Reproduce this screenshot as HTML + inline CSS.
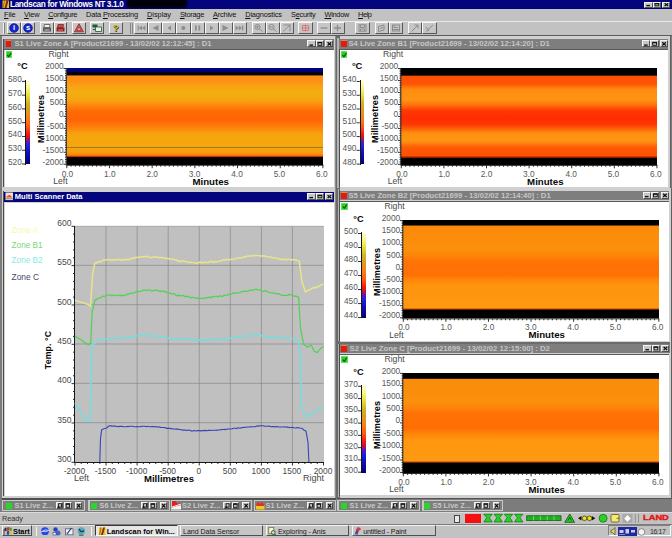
<!DOCTYPE html><html><head><meta charset="utf-8"><title>Landscan for Windows NT 3.1.0</title><style>
*{box-sizing:border-box;margin:0;padding:0}
html,body{width:672px;height:538px;overflow:hidden;background:#7c7c7c}
body{position:relative;font-family:"Liberation Sans",sans-serif;font-size:9px;color:#000}
.a{position:absolute}
.t{position:absolute;white-space:nowrap;line-height:1}
.b{position:absolute;background:#c6c6c6;border:1px solid;border-color:#f4f4f4 #505050 #505050 #f4f4f4}
svg{position:absolute;left:0;top:0;overflow:visible}
</style></head><body><div class="a" style="left:0px;top:0px;width:672px;height:8.8px;background:#04047c;"></div>
<div class="a" style="left:127.5px;top:0px;width:58px;height:6.6px;background:#00000c;border-radius:0 0 3px 3px;box-shadow:0 0 2px 1px #00000c"></div>
<div class="t" style="left:10px;top:0.5px;font-size:8.2px;color:#ffffff;letter-spacing:-0.34px;font-weight:bold;">Landscan for Windows NT 3.1.0</div>
<div class="b" style="left:644.4px;top:1.5px;width:8.3px;height:6.3px"></div>
<div class="b" style="left:652.7px;top:1.5px;width:8.3px;height:6.3px"></div>
<div class="b" style="left:662.2px;top:1.5px;width:8.3px;height:6.3px"></div>
<div class="a" style="left:0px;top:8.8px;width:672px;height:12.2px;background:#c2c2c2;"></div>
<div class="t" style="left:4px;top:10.5px;font-size:7.4px;color:#101010;letter-spacing:-0.11px;"><u>F</u>ile</div>
<div class="t" style="left:24.1px;top:10.5px;font-size:7.4px;color:#101010;letter-spacing:-0.17px;"><u>V</u>iew</div>
<div class="t" style="left:48.2px;top:10.5px;font-size:7.4px;color:#101010;letter-spacing:-0.36px;"><u>C</u>onfigure</div>
<div class="t" style="left:86px;top:10.5px;font-size:7.4px;color:#101010;letter-spacing:-0.15px;">Data <u>P</u>rocessing</div>
<div class="t" style="left:147px;top:10.5px;font-size:7.4px;color:#101010;letter-spacing:-0.04px;"><u>D</u>isplay</div>
<div class="t" style="left:179.9px;top:10.5px;font-size:7.4px;color:#101010;letter-spacing:-0.25px;"><u>S</u>torage</div>
<div class="t" style="left:213px;top:10.5px;font-size:7.4px;color:#101010;letter-spacing:-0.2px;"><u>A</u>rchive</div>
<div class="t" style="left:245.2px;top:10.5px;font-size:7.4px;color:#101010;letter-spacing:-0.15px;"><u>D</u>iagnostics</div>
<div class="t" style="left:291px;top:10.5px;font-size:7.4px;color:#101010;letter-spacing:-0.28px;">S<u>e</u>curity</div>
<div class="t" style="left:324.5px;top:10.5px;font-size:7.4px;color:#101010;letter-spacing:-0.3px;"><u>W</u>indow</div>
<div class="t" style="left:358px;top:10.5px;font-size:7.4px;color:#101010;letter-spacing:-0.41px;"><u>H</u>elp</div>
<div class="a" style="left:0px;top:20.5px;width:672px;height:14.3px;background:#c2c2c2;border-top:1px solid #e8e8e8"></div>
<div class="a" style="left:0px;top:34.8px;width:672px;height:1.6px;background:#5c5c5c;"></div>
<div class="a" style="left:3px;top:22.5px;width:1px;height:11.5px;background:#f0f0f0;"></div>
<div class="a" style="left:4px;top:22.5px;width:1px;height:11.5px;background:#808080;"></div>
<div class="b" style="left:7px;top:21.8px;width:14px;height:11.8px;border-color:#f8f8f8 #585858 #585858 #f8f8f8"></div>
<div class="b" style="left:21px;top:21.8px;width:14px;height:11.8px;border-color:#f8f8f8 #585858 #585858 #f8f8f8"></div>
<div class="b" style="left:40px;top:21.8px;width:13.7px;height:11.8px;border-color:#f8f8f8 #585858 #585858 #f8f8f8"></div>
<div class="b" style="left:53.7px;top:21.8px;width:13.8px;height:11.8px;border-color:#f8f8f8 #585858 #585858 #f8f8f8"></div>
<div class="b" style="left:72px;top:21.8px;width:14px;height:11.8px;border-color:#f8f8f8 #585858 #585858 #f8f8f8"></div>
<div class="b" style="left:90px;top:21.8px;width:14px;height:11.8px;border-color:#f8f8f8 #585858 #585858 #f8f8f8"></div>
<div class="b" style="left:109px;top:21.8px;width:14px;height:11.8px;border-color:#f8f8f8 #585858 #585858 #f8f8f8"></div>
<div class="b" style="left:134px;top:21.8px;width:14px;height:11.8px;border-color:#f8f8f8 #585858 #585858 #f8f8f8"></div>
<div class="b" style="left:148px;top:21.8px;width:14px;height:11.8px;border-color:#f8f8f8 #585858 #585858 #f8f8f8"></div>
<div class="b" style="left:162px;top:21.8px;width:14px;height:11.8px;border-color:#f8f8f8 #585858 #585858 #f8f8f8"></div>
<div class="b" style="left:176px;top:21.8px;width:14.5px;height:11.8px;border-color:#f8f8f8 #585858 #585858 #f8f8f8"></div>
<div class="b" style="left:190.5px;top:21.8px;width:14px;height:11.8px;border-color:#f8f8f8 #585858 #585858 #f8f8f8"></div>
<div class="b" style="left:204.5px;top:21.8px;width:14px;height:11.8px;border-color:#f8f8f8 #585858 #585858 #f8f8f8"></div>
<div class="b" style="left:218.5px;top:21.8px;width:14px;height:11.8px;border-color:#f8f8f8 #585858 #585858 #f8f8f8"></div>
<div class="b" style="left:232.5px;top:21.8px;width:14.5px;height:11.8px;border-color:#f8f8f8 #585858 #585858 #f8f8f8"></div>
<div class="b" style="left:252px;top:21.8px;width:13.5px;height:11.8px;border-color:#f8f8f8 #585858 #585858 #f8f8f8"></div>
<div class="b" style="left:265.5px;top:21.8px;width:14px;height:11.8px;border-color:#f8f8f8 #585858 #585858 #f8f8f8"></div>
<div class="b" style="left:279.5px;top:21.8px;width:14.5px;height:11.8px;border-color:#f8f8f8 #585858 #585858 #f8f8f8"></div>
<div class="b" style="left:298px;top:21.8px;width:15px;height:11.8px;border-color:#f8f8f8 #585858 #585858 #f8f8f8"></div>
<div class="b" style="left:317px;top:21.8px;width:13.5px;height:11.8px;border-color:#f8f8f8 #585858 #585858 #f8f8f8"></div>
<div class="b" style="left:330.5px;top:21.8px;width:14px;height:11.8px;border-color:#f8f8f8 #585858 #585858 #f8f8f8"></div>
<div class="b" style="left:355px;top:21.8px;width:15px;height:11.8px;border-color:#f8f8f8 #585858 #585858 #f8f8f8"></div>
<div class="b" style="left:375px;top:21.8px;width:14px;height:11.8px;border-color:#f8f8f8 #585858 #585858 #f8f8f8"></div>
<div class="b" style="left:389px;top:21.8px;width:14px;height:11.8px;border-color:#f8f8f8 #585858 #585858 #f8f8f8"></div>
<div class="b" style="left:408px;top:21.8px;width:14px;height:11.8px;border-color:#f8f8f8 #585858 #585858 #f8f8f8"></div>
<div class="b" style="left:422px;top:21.8px;width:15px;height:11.8px;border-color:#f8f8f8 #585858 #585858 #f8f8f8"></div>
<div class="a" style="left:129.5px;top:22.5px;width:0.8px;height:11.5px;background:#f0f0f0;"></div>
<div class="a" style="left:130.3px;top:22.5px;width:0.8px;height:11.5px;background:#888;"></div>
<div class="a" style="left:131.5px;top:22.5px;width:0.8px;height:11.5px;background:#f0f0f0;"></div>
<div class="a" style="left:132.3px;top:22.5px;width:0.8px;height:11.5px;background:#888;"></div>
<div class="t" style="left:12.96px;top:24.25px;font-size:7.5px;color:#fff;font-weight:bold;z-index:3;">i</div>
<div class="t" style="left:25.91px;top:24.05px;font-size:7.5px;color:#fff;font-weight:bold;z-index:3;">s</div>
<div class="t" style="left:113.1px;top:23.25px;font-size:9.5px;color:#c8b000;font-weight:bold;text-shadow:0.500px 0.500px 0 #403000;">?</div>
<div class="a" style="left:1.5px;top:36.3px;width:334.5px;height:154px;background:#d0d0d0;"></div>
<div class="a" style="left:2.9px;top:38.7px;width:1.6px;height:148.8px;background:#4c4c4c;"></div>
<div class="a" style="left:335.3px;top:36.3px;width:0.7px;height:154px;background:#8c8c8c;"></div>
<div class="a" style="left:1.5px;top:189.6px;width:334.5px;height:0.7px;background:#606060;"></div>
<div class="a" style="left:4px;top:39px;width:329.7px;height:9.7px;background:#7e7e7e;"></div>
<div class="a" style="left:5.7px;top:40.3px;width:5.7px;height:6.8px;background:#e01c10;border-top:1.300px solid #f08040"></div>
<div class="t" style="left:14.5px;top:40.22px;font-size:7.63px;color:#c6c6c6;letter-spacing:0px;font-weight:bold;">S1 Live Zone A [Product21699 - 13/02/02 12:12:45] : D1</div>
<div class="b" style="left:307.4px;top:40.4px;width:8.3px;height:6.9px"></div>
<div class="b" style="left:315.7px;top:40.4px;width:8.3px;height:6.9px"></div>
<div class="b" style="left:325.2px;top:40.4px;width:8.3px;height:6.9px"></div>
<div class="a" style="left:4.5px;top:50px;width:329px;height:136.7px;background:#ffffff;"></div>
<div class="a" style="left:4px;top:49.3px;width:329.5px;height:0.9px;background:#585858;"></div>
<div class="a" style="left:5.5px;top:51.3px;width:6.6px;height:6.9px;background:#28d028;border:0.600px solid #60e060"></div>
<div class="t" style="left:48.5px;top:49.9px;font-size:8.6px;color:#484848;">Right</div>
<div class="t" style="left:17.3px;top:62.25px;font-size:9.3px;color:#080808;font-weight:bold;">°C</div>
<div class="a" style="left:26.2px;top:80.6px;width:3.6px;height:83.7px;background:linear-gradient(to bottom,#ffffc8 0%,#f8f888 8%,#e8e038 17%,#d0b028 27%,#e09820 36%,#f88018 45%,#ff5810 55%,#f01810 64%,#c01040 69.5%,#6018b0 73%,#2020e0 78%,#1010c0 86%,#000078 100%);"></div>
<div class="a" style="left:25.1px;top:80.3px;width:1.3px;height:84.5px;background:#181818;"></div>
<div class="t" style="left:7.95px;top:75.25px;font-size:8.3px;color:#585858;">580</div>
<div class="t" style="left:7.95px;top:89.02px;font-size:8.3px;color:#585858;">570</div>
<div class="t" style="left:7.95px;top:102.78px;font-size:8.3px;color:#585858;">560</div>
<div class="t" style="left:7.95px;top:116.55px;font-size:8.3px;color:#585858;">550</div>
<div class="t" style="left:7.95px;top:130.32px;font-size:8.3px;color:#585858;">540</div>
<div class="t" style="left:7.95px;top:144.08px;font-size:8.3px;color:#585858;">530</div>
<div class="t" style="left:7.95px;top:157.85px;font-size:8.3px;color:#585858;">520</div>
<div class="a" style="left:66.8px;top:68px;width:256.1px;height:96.7px;background:linear-gradient(to bottom,#000080 0%,#00007c 3.72%,#000000 4.76%,#000000 7.14%,#ff8c14 8.17%,#ff9014 13.44%,#f8a412 19.65%,#f2ae10 25.85%,#f6a410 33.09%,#fe840c 39.3%,#ff6806 45.5%,#ff6404 53.77%,#fe840c 62.05%,#f6a40e 68.25%,#f4a80c 81.7%,#f69c0c 86.87%,#ff7c0c 89.97%,#c03000 91.31%,#000000 92.24%,#000000 100%);"></div>
<div class="a" style="left:66.8px;top:147px;width:256.1px;height:0.9px;background:rgba(140,100,50,0.750);"></div>
<div class="t" style="left:45.24px;top:62.05px;font-size:8.3px;color:#585858;">2000</div>
<div class="t" style="left:45.24px;top:74.01px;font-size:8.3px;color:#585858;">1500</div>
<div class="t" style="left:45.24px;top:85.97px;font-size:8.3px;color:#585858;">1000</div>
<div class="t" style="left:49.85px;top:97.94px;font-size:8.3px;color:#585858;">500</div>
<div class="t" style="left:59.08px;top:109.9px;font-size:8.3px;color:#585858;">0</div>
<div class="t" style="left:47.09px;top:121.86px;font-size:8.3px;color:#585858;">-500</div>
<div class="t" style="left:42.47px;top:133.82px;font-size:8.3px;color:#585858;">-1000</div>
<div class="t" style="left:42.47px;top:145.79px;font-size:8.3px;color:#585858;">-1500</div>
<div class="t" style="left:42.47px;top:157.75px;font-size:8.3px;color:#585858;">-2000</div>
<div class="t" style="left:41.5px;top:118.85px;font-size:9.200px;font-weight:bold;color:#080808;transform:translate(-50%,-50%) rotate(-90deg)">Millimetres</div>
<div class="t" style="left:61.63px;top:169.55px;font-size:8.3px;color:#585858;">0.0</div>
<div class="t" style="left:104.03px;top:169.55px;font-size:8.3px;color:#585858;">1.0</div>
<div class="t" style="left:146.43px;top:169.55px;font-size:8.3px;color:#585858;">2.0</div>
<div class="t" style="left:188.83px;top:169.55px;font-size:8.3px;color:#585858;">3.0</div>
<div class="t" style="left:231.23px;top:169.55px;font-size:8.3px;color:#585858;">4.0</div>
<div class="t" style="left:273.63px;top:169.55px;font-size:8.3px;color:#585858;">5.0</div>
<div class="t" style="left:316.03px;top:169.55px;font-size:8.3px;color:#585858;">6.0</div>
<div class="t" style="left:53.2px;top:177.2px;font-size:8.6px;color:#484848;">Left</div>
<div class="t" style="left:192.5px;top:176.88px;font-size:9.66px;color:#080808;letter-spacing:0px;font-weight:bold;">Minutes</div>
<div class="a" style="left:336.8px;top:36.3px;width:333.9px;height:154px;background:#d0d0d0;"></div>
<div class="a" style="left:335.6px;top:36.3px;width:4.2px;height:154px;background:#6a6a6a;"></div>
<div class="a" style="left:337.4px;top:37.5px;width:1.3px;height:151.7px;background:#b4b4b4;"></div>
<div class="a" style="left:338.7px;top:38.7px;width:1.1px;height:148.8px;background:#4c4c4c;"></div>
<div class="a" style="left:670px;top:36.3px;width:0.7px;height:154px;background:#606060;"></div>
<div class="a" style="left:336.8px;top:189.6px;width:333.9px;height:0.7px;background:#606060;"></div>
<div class="a" style="left:339.3px;top:39px;width:329.1px;height:9.7px;background:#7e7e7e;"></div>
<div class="a" style="left:341px;top:40.3px;width:5.7px;height:6.8px;background:#e01c10;border-top:1.300px solid #f08040"></div>
<div class="t" style="left:348.5px;top:40.23px;font-size:7.62px;color:#c6c6c6;letter-spacing:0px;font-weight:bold;">S4 Live Zone B1 [Product21699 - 13/02/02 12:14:20] : D1</div>
<div class="b" style="left:642.1px;top:40.4px;width:8.3px;height:6.9px"></div>
<div class="b" style="left:650.4px;top:40.4px;width:8.3px;height:6.9px"></div>
<div class="b" style="left:659.9px;top:40.4px;width:8.3px;height:6.9px"></div>
<div class="a" style="left:339.8px;top:50px;width:328.4px;height:136.7px;background:#ffffff;"></div>
<div class="a" style="left:339.3px;top:49.3px;width:328.9px;height:0.9px;background:#585858;"></div>
<div class="a" style="left:340.8px;top:51.3px;width:6.6px;height:6.9px;background:#28d028;border:0.600px solid #60e060"></div>
<div class="t" style="left:383.1px;top:50px;font-size:8.6px;color:#484848;">Right</div>
<div class="t" style="left:351.9px;top:62.35px;font-size:9.3px;color:#080808;font-weight:bold;">°C</div>
<div class="a" style="left:360.8px;top:80.7px;width:3.6px;height:83.7px;background:linear-gradient(to bottom,#ffffc8 0%,#f8f888 8%,#e8e038 17%,#d0b028 27%,#e09820 36%,#f88018 45%,#ff5810 55%,#f01810 64%,#c01040 69.5%,#6018b0 73%,#2020e0 78%,#1010c0 86%,#000078 100%);"></div>
<div class="a" style="left:359.7px;top:80.4px;width:1.3px;height:84.5px;background:#181818;"></div>
<div class="t" style="left:342.55px;top:75.35px;font-size:8.3px;color:#585858;">540</div>
<div class="t" style="left:342.55px;top:89.12px;font-size:8.3px;color:#585858;">530</div>
<div class="t" style="left:342.55px;top:102.88px;font-size:8.3px;color:#585858;">520</div>
<div class="t" style="left:342.55px;top:116.65px;font-size:8.3px;color:#585858;">510</div>
<div class="t" style="left:342.55px;top:130.42px;font-size:8.3px;color:#585858;">500</div>
<div class="t" style="left:342.55px;top:144.18px;font-size:8.3px;color:#585858;">490</div>
<div class="t" style="left:342.55px;top:157.95px;font-size:8.3px;color:#585858;">480</div>
<div class="a" style="left:401.3px;top:68.1px;width:255.6px;height:96.7px;background:linear-gradient(to bottom,#000000 0%,#000000 7.14%,#ff5004 8.79%,#ff5406 16.44%,#ff8c10 22.13%,#ff9412 32.99%,#ff6c0a 38.68%,#ff3802 43.85%,#ff2c00 51.6%,#ff3602 57.81%,#ff6006 62.77%,#ff9010 67.11%,#ff9412 75.39%,#ff5c06 81.59%,#ff5004 90.38%,#a02000 92.14%,#000000 93.38%,#000000 100%);"></div>
<div class="t" style="left:379.74px;top:62.15px;font-size:8.3px;color:#585858;">2000</div>
<div class="t" style="left:379.74px;top:74.11px;font-size:8.3px;color:#585858;">1500</div>
<div class="t" style="left:379.74px;top:86.08px;font-size:8.3px;color:#585858;">1000</div>
<div class="t" style="left:384.35px;top:98.04px;font-size:8.3px;color:#585858;">500</div>
<div class="t" style="left:393.58px;top:110px;font-size:8.3px;color:#585858;">0</div>
<div class="t" style="left:381.59px;top:121.96px;font-size:8.3px;color:#585858;">-500</div>
<div class="t" style="left:376.97px;top:133.92px;font-size:8.3px;color:#585858;">-1000</div>
<div class="t" style="left:376.97px;top:145.89px;font-size:8.3px;color:#585858;">-1500</div>
<div class="t" style="left:376.97px;top:157.85px;font-size:8.3px;color:#585858;">-2000</div>
<div class="t" style="left:376.1px;top:118.95px;font-size:9.200px;font-weight:bold;color:#080808;transform:translate(-50%,-50%) rotate(-90deg)">Millimetres</div>
<div class="t" style="left:396.13px;top:169.65px;font-size:8.3px;color:#585858;">0.0</div>
<div class="t" style="left:438.45px;top:169.65px;font-size:8.3px;color:#585858;">1.0</div>
<div class="t" style="left:480.76px;top:169.65px;font-size:8.3px;color:#585858;">2.0</div>
<div class="t" style="left:523.08px;top:169.65px;font-size:8.3px;color:#585858;">3.0</div>
<div class="t" style="left:565.4px;top:169.65px;font-size:8.3px;color:#585858;">4.0</div>
<div class="t" style="left:607.71px;top:169.65px;font-size:8.3px;color:#585858;">5.0</div>
<div class="t" style="left:650.03px;top:169.65px;font-size:8.3px;color:#585858;">6.0</div>
<div class="t" style="left:387.8px;top:177.3px;font-size:8.6px;color:#484848;">Left</div>
<div class="t" style="left:527.1px;top:176.98px;font-size:9.66px;color:#080808;letter-spacing:0px;font-weight:bold;">Minutes</div>
<div class="a" style="left:337.2px;top:187.8px;width:334.3px;height:156.4px;background:#d0d0d0;"></div>
<div class="a" style="left:336px;top:187.8px;width:4.2px;height:156.4px;background:#6a6a6a;"></div>
<div class="a" style="left:337.8px;top:189px;width:1.3px;height:154.1px;background:#b4b4b4;"></div>
<div class="a" style="left:339.1px;top:190.2px;width:1.1px;height:151.2px;background:#4c4c4c;"></div>
<div class="a" style="left:670.8px;top:187.8px;width:0.7px;height:156.4px;background:#606060;"></div>
<div class="a" style="left:337.2px;top:343.5px;width:334.3px;height:0.7px;background:#606060;"></div>
<div class="a" style="left:339.7px;top:190.5px;width:329.5px;height:9.7px;background:#7e7e7e;"></div>
<div class="a" style="left:341.4px;top:191.8px;width:5.7px;height:6.8px;background:#e01c10;border-top:1.300px solid #f08040"></div>
<div class="t" style="left:348.5px;top:191.7px;font-size:7.65px;color:#c6c6c6;letter-spacing:0px;font-weight:bold;">S5 Live Zone B2 [Product21699 - 13/02/02 12:14:40] : D1</div>
<div class="b" style="left:642.9px;top:191.9px;width:8.3px;height:6.9px"></div>
<div class="b" style="left:651.2px;top:191.9px;width:8.3px;height:6.9px"></div>
<div class="b" style="left:660.7px;top:191.9px;width:8.3px;height:6.9px"></div>
<div class="a" style="left:340.2px;top:201.5px;width:328.8px;height:139.1px;background:#ffffff;"></div>
<div class="a" style="left:339.7px;top:200.8px;width:329.3px;height:0.9px;background:#585858;"></div>
<div class="a" style="left:341.2px;top:202.8px;width:6.6px;height:6.9px;background:#28d028;border:0.600px solid #60e060"></div>
<div class="t" style="left:384.5px;top:202px;font-size:8.6px;color:#484848;">Right</div>
<div class="t" style="left:353.3px;top:214.8px;font-size:9.3px;color:#080808;font-weight:bold;">°C</div>
<div class="a" style="left:362.2px;top:232.7px;width:3.6px;height:85.2px;background:linear-gradient(to bottom,#ffffc8 0%,#f8f888 8%,#e8e038 17%,#d0b028 27%,#e09820 36%,#f88018 45%,#ff5810 55%,#f01810 64%,#c01040 69.5%,#6018b0 73%,#2020e0 78%,#1010c0 86%,#000078 100%);"></div>
<div class="a" style="left:361.1px;top:232.4px;width:1.3px;height:86px;background:#181818;"></div>
<div class="t" style="left:343.95px;top:227.35px;font-size:8.3px;color:#585858;">500</div>
<div class="t" style="left:343.95px;top:241.37px;font-size:8.3px;color:#585858;">490</div>
<div class="t" style="left:343.95px;top:255.38px;font-size:8.3px;color:#585858;">480</div>
<div class="t" style="left:343.95px;top:269.4px;font-size:8.3px;color:#585858;">470</div>
<div class="t" style="left:343.95px;top:283.42px;font-size:8.3px;color:#585858;">460</div>
<div class="t" style="left:343.95px;top:297.43px;font-size:8.3px;color:#585858;">450</div>
<div class="t" style="left:343.95px;top:311.45px;font-size:8.3px;color:#585858;">440</div>
<div class="a" style="left:403.3px;top:220.1px;width:255.5px;height:98.2px;background:linear-gradient(to bottom,#000000 0%,#000000 5.09%,#fc8a0a 6.21%,#fc900c 30.45%,#fe840a 36.56%,#ff7406 41.65%,#ff7004 55.91%,#fe860a 61%,#ff940e 67.11%,#ff9810 89.71%,#c04000 90.94%,#000000 91.85%,#000000 100%);"></div>
<div class="t" style="left:381.74px;top:214.15px;font-size:8.3px;color:#585858;">2000</div>
<div class="t" style="left:381.74px;top:226.3px;font-size:8.3px;color:#585858;">1500</div>
<div class="t" style="left:381.74px;top:238.45px;font-size:8.3px;color:#585858;">1000</div>
<div class="t" style="left:386.35px;top:250.6px;font-size:8.3px;color:#585858;">500</div>
<div class="t" style="left:395.58px;top:262.75px;font-size:8.3px;color:#585858;">0</div>
<div class="t" style="left:383.59px;top:274.9px;font-size:8.3px;color:#585858;">-500</div>
<div class="t" style="left:378.97px;top:287.05px;font-size:8.3px;color:#585858;">-1000</div>
<div class="t" style="left:378.97px;top:299.2px;font-size:8.3px;color:#585858;">-1500</div>
<div class="t" style="left:378.97px;top:311.35px;font-size:8.3px;color:#585858;">-2000</div>
<div class="t" style="left:377.5px;top:271.7px;font-size:9.200px;font-weight:bold;color:#080808;transform:translate(-50%,-50%) rotate(-90deg)">Millimetres</div>
<div class="t" style="left:398.13px;top:323.15px;font-size:8.3px;color:#585858;">0.0</div>
<div class="t" style="left:440.43px;top:323.15px;font-size:8.3px;color:#585858;">1.0</div>
<div class="t" style="left:482.73px;top:323.15px;font-size:8.3px;color:#585858;">2.0</div>
<div class="t" style="left:525.03px;top:323.15px;font-size:8.3px;color:#585858;">3.0</div>
<div class="t" style="left:567.33px;top:323.15px;font-size:8.3px;color:#585858;">4.0</div>
<div class="t" style="left:609.63px;top:323.15px;font-size:8.3px;color:#585858;">5.0</div>
<div class="t" style="left:651.93px;top:323.15px;font-size:8.3px;color:#585858;">6.0</div>
<div class="t" style="left:389.2px;top:330.8px;font-size:8.6px;color:#484848;">Left</div>
<div class="t" style="left:528.5px;top:330.48px;font-size:9.66px;color:#080808;letter-spacing:0px;font-weight:bold;">Minutes</div>
<div class="a" style="left:337.2px;top:340.9px;width:334.8px;height:157.5px;background:#d0d0d0;"></div>
<div class="a" style="left:336px;top:340.9px;width:4.2px;height:157.5px;background:#6a6a6a;"></div>
<div class="a" style="left:337.8px;top:342.1px;width:1.3px;height:155.2px;background:#b4b4b4;"></div>
<div class="a" style="left:339.1px;top:343.3px;width:1.1px;height:152.3px;background:#4c4c4c;"></div>
<div class="a" style="left:671.3px;top:340.9px;width:0.7px;height:157.5px;background:#606060;"></div>
<div class="a" style="left:337.2px;top:497.6px;width:334.8px;height:1.7px;background:#545454;"></div>
<div class="a" style="left:337.2px;top:342.3px;width:333.3px;height:1.3px;background:#6c6c6c;"></div>
<div class="a" style="left:339.7px;top:343.6px;width:330px;height:9.7px;background:#7e7e7e;"></div>
<div class="a" style="left:341.4px;top:344.9px;width:5.7px;height:6.8px;background:#e01c10;border-top:1.300px solid #f08040"></div>
<div class="t" style="left:349.5px;top:344.72px;font-size:7.74px;color:#c6c6c6;letter-spacing:0px;font-weight:bold;">S2 Live Zone C [Product21699 - 13/02/02 12:15:00] : D2</div>
<div class="b" style="left:643.4px;top:345px;width:8.3px;height:6.9px"></div>
<div class="b" style="left:651.7px;top:345px;width:8.3px;height:6.9px"></div>
<div class="b" style="left:661.2px;top:345px;width:8.3px;height:6.9px"></div>
<div class="a" style="left:340.2px;top:354.6px;width:329.3px;height:140.2px;background:#ffffff;"></div>
<div class="a" style="left:339.7px;top:353.9px;width:329.8px;height:0.9px;background:#585858;"></div>
<div class="a" style="left:341.2px;top:355.9px;width:6.6px;height:6.9px;background:#28d028;border:0.600px solid #60e060"></div>
<div class="t" style="left:384.5px;top:354.8px;font-size:8.6px;color:#484848;">Right</div>
<div class="t" style="left:353.3px;top:368.14px;font-size:9.3px;color:#080808;font-weight:bold;">°C</div>
<div class="a" style="left:362.2px;top:385.5px;width:3.6px;height:87px;background:linear-gradient(to bottom,#ffffc8 0%,#f8f888 8%,#e8e038 17%,#d0b028 27%,#e09820 36%,#f88018 45%,#ff5810 55%,#f01810 64%,#c01040 69.5%,#6018b0 73%,#2020e0 78%,#1010c0 86%,#000078 100%);"></div>
<div class="a" style="left:361.1px;top:385.2px;width:1.3px;height:87.8px;background:#181818;"></div>
<div class="t" style="left:343.95px;top:380.15px;font-size:8.3px;color:#585858;">370</div>
<div class="t" style="left:343.95px;top:392.42px;font-size:8.3px;color:#585858;">360</div>
<div class="t" style="left:343.95px;top:404.69px;font-size:8.3px;color:#585858;">350</div>
<div class="t" style="left:343.95px;top:416.96px;font-size:8.3px;color:#585858;">340</div>
<div class="t" style="left:343.95px;top:429.24px;font-size:8.3px;color:#585858;">330</div>
<div class="t" style="left:343.95px;top:441.51px;font-size:8.3px;color:#585858;">320</div>
<div class="t" style="left:343.95px;top:453.78px;font-size:8.3px;color:#585858;">310</div>
<div class="t" style="left:343.95px;top:466.05px;font-size:8.3px;color:#585858;">300</div>
<div class="a" style="left:403.3px;top:372.9px;width:255.6px;height:100px;background:linear-gradient(to bottom,#000000 0%,#000000 5.3%,#fa8c0a 6.3%,#fa900c 29.1%,#fe840a 35.1%,#ff7206 40.1%,#ff6e04 55.1%,#fe860a 61.1%,#ff960e 67.1%,#ff9a12 87.9%,#c04000 89.1%,#000000 90.1%,#000000 100%);"></div>
<div class="t" style="left:381.74px;top:366.95px;font-size:8.3px;color:#585858;">2000</div>
<div class="t" style="left:381.74px;top:379.32px;font-size:8.3px;color:#585858;">1500</div>
<div class="t" style="left:381.74px;top:391.7px;font-size:8.3px;color:#585858;">1000</div>
<div class="t" style="left:386.35px;top:404.07px;font-size:8.3px;color:#585858;">500</div>
<div class="t" style="left:395.58px;top:416.45px;font-size:8.3px;color:#585858;">0</div>
<div class="t" style="left:383.59px;top:428.82px;font-size:8.3px;color:#585858;">-500</div>
<div class="t" style="left:378.97px;top:441.2px;font-size:8.3px;color:#585858;">-1000</div>
<div class="t" style="left:378.97px;top:453.57px;font-size:8.3px;color:#585858;">-1500</div>
<div class="t" style="left:378.97px;top:465.95px;font-size:8.3px;color:#585858;">-2000</div>
<div class="t" style="left:377.5px;top:425.4px;font-size:9.200px;font-weight:bold;color:#080808;transform:translate(-50%,-50%) rotate(-90deg)">Millimetres</div>
<div class="t" style="left:398.13px;top:477.75px;font-size:8.3px;color:#585858;">0.0</div>
<div class="t" style="left:440.45px;top:477.75px;font-size:8.3px;color:#585858;">1.0</div>
<div class="t" style="left:482.76px;top:477.75px;font-size:8.3px;color:#585858;">2.0</div>
<div class="t" style="left:525.08px;top:477.75px;font-size:8.3px;color:#585858;">3.0</div>
<div class="t" style="left:567.4px;top:477.75px;font-size:8.3px;color:#585858;">4.0</div>
<div class="t" style="left:609.71px;top:477.75px;font-size:8.3px;color:#585858;">5.0</div>
<div class="t" style="left:652.03px;top:477.75px;font-size:8.3px;color:#585858;">6.0</div>
<div class="t" style="left:389.2px;top:485.4px;font-size:8.6px;color:#484848;">Left</div>
<div class="t" style="left:528.5px;top:485.08px;font-size:9.66px;color:#080808;letter-spacing:0px;font-weight:bold;">Minutes</div>
<div class="a" style="left:1.5px;top:190px;width:334.5px;height:309.3px;background:#d0d0d0;"></div>
<div class="a" style="left:2.9px;top:191.2px;width:1.6px;height:305.3px;background:#4c4c4c;"></div>
<div class="a" style="left:335.3px;top:190px;width:0.7px;height:309.3px;background:#8c8c8c;"></div>
<div class="a" style="left:1.5px;top:497.9px;width:334.5px;height:1.7px;background:#505050;"></div>
<div class="a" style="left:4px;top:191.5px;width:330.3px;height:10px;background:#04047c;"></div>
<div class="t" style="left:14.8px;top:192.91px;font-size:7.52px;color:#ffffff;letter-spacing:0px;font-weight:bold;">Multi Scanner Data</div>
<div class="b" style="left:307.4px;top:193.3px;width:8.3px;height:6.5px"></div>
<div class="b" style="left:315.7px;top:193.3px;width:8.3px;height:6.5px"></div>
<div class="b" style="left:325.2px;top:193.3px;width:8.3px;height:6.5px"></div>
<div class="a" style="left:4.5px;top:202.5px;width:329px;height:293.2px;background:#ffffff;"></div>
<div class="a" style="left:75px;top:226px;width:248.5px;height:236px;background:#c0c0c0;"></div>
<div class="t" style="left:57.32px;top:218.95px;font-size:8.5px;color:#484848;">600</div>
<div class="t" style="left:57.32px;top:258.28px;font-size:8.5px;color:#484848;">550</div>
<div class="t" style="left:57.32px;top:297.62px;font-size:8.5px;color:#484848;">500</div>
<div class="t" style="left:57.32px;top:336.95px;font-size:8.5px;color:#484848;">450</div>
<div class="t" style="left:57.32px;top:376.28px;font-size:8.5px;color:#484848;">400</div>
<div class="t" style="left:57.32px;top:415.62px;font-size:8.5px;color:#484848;">350</div>
<div class="t" style="left:57.32px;top:454.95px;font-size:8.5px;color:#484848;">300</div>
<div class="t" style="left:63.76px;top:466.8px;font-size:8.4px;color:#484848;">-2000</div>
<div class="t" style="left:94.82px;top:466.8px;font-size:8.4px;color:#484848;">-1500</div>
<div class="t" style="left:125.88px;top:466.8px;font-size:8.4px;color:#484848;">-1000</div>
<div class="t" style="left:159.28px;top:466.8px;font-size:8.4px;color:#484848;">-500</div>
<div class="t" style="left:196.41px;top:466.8px;font-size:8.4px;color:#484848;">0</div>
<div class="t" style="left:222.8px;top:466.8px;font-size:8.4px;color:#484848;">500</div>
<div class="t" style="left:251.53px;top:466.8px;font-size:8.4px;color:#484848;">1000</div>
<div class="t" style="left:282.59px;top:466.8px;font-size:8.4px;color:#484848;">1500</div>
<div class="t" style="left:313.66px;top:466.8px;font-size:8.4px;color:#484848;">2000</div>
<div class="t" style="left:74px;top:474px;font-size:9px;color:#484848;">Left</div>
<div class="t" style="left:303px;top:474px;font-size:9px;color:#484848;">Right</div>
<div class="t" style="left:144px;top:473.72px;font-size:9.57px;color:#080808;letter-spacing:0px;font-weight:bold;">Millimetres</div>
<div class="t" style="left:48.200px;top:349.500px;font-size:8.800px;letter-spacing:0.100px;font-weight:bold;color:#080808;transform:translate(-50%,-50%) rotate(-90deg)">Temp. °C</div>
<div class="t" style="left:11.5px;top:225.7px;font-size:8.52px;color:#f8f8a8;letter-spacing:0px;">Zone A</div>
<div class="t" style="left:11.5px;top:241.73px;font-size:8.25px;color:#78d878;letter-spacing:0px;">Zone B1</div>
<div class="t" style="left:11.5px;top:257.43px;font-size:8.25px;color:#88e8e8;letter-spacing:0px;">Zone B2</div>
<div class="t" style="left:11.5px;top:273.06px;font-size:8.45px;color:#484868;letter-spacing:0px;">Zone C</div>
<div class="a" style="left:1.7px;top:499.7px;width:83.3px;height:11.6px;background:#c8c8c8;"></div>
<div class="a" style="left:3.3px;top:500.7px;width:80.3px;height:9.5px;background:#7e7e7e;"></div>
<div class="a" style="left:5.5px;top:502.6px;width:6.8px;height:6.3px;background:#28d828;"></div>
<div class="t" style="left:14.6px;top:501.96px;font-size:7.35px;color:#c8c8c8;letter-spacing:0px;font-weight:bold;">S1 Live Z...</div>
<div class="b" style="left:55.6px;top:502.200px;width:7.7px;height:6.900px"></div>
<div class="b" style="left:64px;top:502.200px;width:7.7px;height:6.900px"></div>
<div class="b" style="left:74.8px;top:502.200px;width:7.7px;height:6.900px"></div>
<div class="a" style="left:88px;top:499.7px;width:82px;height:11.6px;background:#c8c8c8;"></div>
<div class="a" style="left:89.6px;top:500.7px;width:79px;height:9.5px;background:#7e7e7e;"></div>
<div class="a" style="left:90.5px;top:502.6px;width:6.8px;height:6.3px;background:#28d828;"></div>
<div class="t" style="left:99.6px;top:501.96px;font-size:7.35px;color:#c8c8c8;letter-spacing:0px;font-weight:bold;">S6 Live Z...</div>
<div class="b" style="left:140.6px;top:502.200px;width:7.7px;height:6.900px"></div>
<div class="b" style="left:149px;top:502.200px;width:7.7px;height:6.900px"></div>
<div class="b" style="left:159.8px;top:502.200px;width:7.7px;height:6.900px"></div>
<div class="a" style="left:170.8px;top:499.7px;width:81.7px;height:11.6px;background:#c8c8c8;"></div>
<div class="a" style="left:172.4px;top:500.7px;width:78.7px;height:9.5px;background:#7e7e7e;"></div>
<div class="t" style="left:182.1px;top:501.96px;font-size:7.35px;color:#c8c8c8;letter-spacing:0px;font-weight:bold;">S2 Live Z...</div>
<div class="b" style="left:223.1px;top:502.200px;width:7.7px;height:6.900px"></div>
<div class="b" style="left:231.5px;top:502.200px;width:7.7px;height:6.900px"></div>
<div class="b" style="left:242.3px;top:502.200px;width:7.7px;height:6.900px"></div>
<div class="a" style="left:253.7px;top:499.7px;width:82.3px;height:11.6px;background:#c8c8c8;"></div>
<div class="a" style="left:255.3px;top:500.7px;width:79.3px;height:9.5px;background:#7e7e7e;"></div>
<div class="t" style="left:265.6px;top:501.96px;font-size:7.35px;color:#c8c8c8;letter-spacing:0px;font-weight:bold;">S1 Live Z...</div>
<div class="b" style="left:306.6px;top:502.200px;width:7.7px;height:6.900px"></div>
<div class="b" style="left:315px;top:502.200px;width:7.7px;height:6.900px"></div>
<div class="b" style="left:325.8px;top:502.200px;width:7.7px;height:6.900px"></div>
<div class="a" style="left:337px;top:499.7px;width:83px;height:11.6px;background:#c8c8c8;"></div>
<div class="a" style="left:338.6px;top:500.7px;width:80px;height:9.5px;background:#7e7e7e;"></div>
<div class="a" style="left:340.5px;top:502.6px;width:6.8px;height:6.3px;background:#28d828;"></div>
<div class="t" style="left:349.6px;top:501.96px;font-size:7.35px;color:#c8c8c8;letter-spacing:0px;font-weight:bold;">S1 Live Z...</div>
<div class="b" style="left:390.6px;top:502.200px;width:7.7px;height:6.900px"></div>
<div class="b" style="left:399px;top:502.200px;width:7.7px;height:6.900px"></div>
<div class="b" style="left:409.8px;top:502.200px;width:7.7px;height:6.900px"></div>
<div class="a" style="left:422px;top:499.7px;width:81px;height:11.6px;background:#c8c8c8;"></div>
<div class="a" style="left:423.6px;top:500.7px;width:78px;height:9.5px;background:#7e7e7e;"></div>
<div class="a" style="left:423.5px;top:502.6px;width:6.8px;height:6.3px;background:#28d828;"></div>
<div class="t" style="left:432.6px;top:501.96px;font-size:7.35px;color:#c8c8c8;letter-spacing:0px;font-weight:bold;">S5 Live Z...</div>
<div class="b" style="left:473.6px;top:502.200px;width:7.7px;height:6.900px"></div>
<div class="b" style="left:482px;top:502.200px;width:7.7px;height:6.900px"></div>
<div class="b" style="left:492.8px;top:502.200px;width:7.7px;height:6.900px"></div>
<div class="a" style="left:0px;top:511.7px;width:672px;height:12.8px;background:#c2c2c2;border-top:1px solid #dcdcdc"></div>
<div class="t" style="left:2px;top:515.23px;font-size:7.26px;color:#303030;letter-spacing:0px;">Ready</div>
<div class="a" style="left:453.5px;top:514.5px;width:6px;height:8.5px;background:#e8e8e8;border:1px solid #484848"></div>
<div class="a" style="left:465px;top:514.3px;width:15.5px;height:9px;background:#f41010;"></div>
<div class="t" style="left:643.200px;top:514.400px;font-size:7.700px;font-weight:bold;color:#e41414;-webkit-text-stroke:0.400px #e41414;transform-origin:0 50%;transform:scaleX(1.210)">LAND</div>
<div class="a" style="left:0px;top:524.5px;width:672px;height:13.5px;background:#c2c2c2;border-top:1px solid #e8e8e8"></div>
<div class="b" style="left:2px;top:525.3px;width:30px;height:10.9px"></div>
<div class="t" style="left:13px;top:527.84px;font-size:7.37px;color:#000;letter-spacing:0px;font-weight:bold;">Start</div>
<div class="a" style="left:35.5px;top:526.5px;width:0.8px;height:9.5px;background:#808080;"></div>
<div class="a" style="left:36.3px;top:526.5px;width:0.8px;height:9.5px;background:#f4f4f4;"></div>
<div class="a" style="left:90.5px;top:526.5px;width:0.8px;height:9.5px;background:#808080;"></div>
<div class="a" style="left:91.3px;top:526.5px;width:0.8px;height:9.5px;background:#f4f4f4;"></div>
<div class="b" style="left:95px;top:525.3px;width:83.3px;height:10.9px;background:#e6e6e6;border-color:#383838 #f8f8f8 #f8f8f8 #383838"></div>
<div class="t" style="left:106.7px;top:527.8px;font-size:7.41px;color:#000;letter-spacing:0px;font-weight:bold;">Landscan for Win...</div>
<div class="b" style="left:180.3px;top:525.3px;width:83.2px;height:10.9px"></div>
<div class="t" style="left:183px;top:528.07px;font-size:7.02px;color:#181818;letter-spacing:-0.02px;">Land Data Sensor</div>
<div class="b" style="left:265.8px;top:525.3px;width:83.4px;height:10.9px"></div>
<div class="t" style="left:278px;top:528.07px;font-size:7.02px;color:#181818;letter-spacing:-0.07px;">Exploring - Anis</div>
<div class="b" style="left:351.5px;top:525.3px;width:84.2px;height:10.9px"></div>
<div class="t" style="left:363.2px;top:528.07px;font-size:7.02px;color:#181818;letter-spacing:-0.11px;">untitled - Paint</div>
<div class="a" style="left:607.5px;top:525.3px;width:63.5px;height:11.2px;background:#c2c2c2;border:1px solid;border-color:#808080 #f8f8f8 #f8f8f8 #808080"></div>
<div class="a" style="left:618.3px;top:527px;width:19.2px;height:8.5px;background:#2028a0;"></div>
<div class="t" style="left:650px;top:528.07px;font-size:7.02px;color:#303030;letter-spacing:-0.44px;">16:17</div>
<svg width="672" height="538" viewBox="0 0 672 538"><path d="M2.500 0.500h6.500v7.500h-6.500z" fill="#f0c020"/><path d="M4.500 8l2 -7.500h2l-2 7.500z" fill="#7a2800"/><path d="M2.500 8l1.500 -7.500h1l-1.500 7.500z" fill="#b06010"/>
<path d="M646.4 5.6h3.600" stroke="#101010" stroke-width="1.300"/>
<rect x="655" y="3.5" width="3.800" height="2.3" fill="none" stroke="#101010" stroke-width="0.900"/><path d="M654.7 3.7h4.400" stroke="#101010" stroke-width="1.300"/>
<path d="M664.6 3.3l3.600 2.7m0 -2.7l-3.600 2.7" stroke="#101010" stroke-width="1.200" fill="none"/>
<circle cx="14" cy="28" r="4.300" fill="#1428d8" stroke="#0a1470" stroke-width="0.800"/><circle cx="28" cy="28" r="4.300" fill="#1428d8" stroke="#0a1470" stroke-width="0.800"/>
<path d="M43 27.500h8v4h-8z" fill="#585858"/><path d="M44.500 24.500h5.500l-0.500 3h-5.500z" fill="#f0f0f0" stroke="#404040" stroke-width="0.700"/><path d="M44.500 30h5" stroke="#d8d8d8" stroke-width="0.900"/>
<path d="M56.500 27.500h8v4h-8z" fill="#902020"/><path d="M58 24.500h5.500l-0.500 3h-5.500z" fill="#d04848" stroke="#701818" stroke-width="0.700"/><path d="M58 30h5" stroke="#e09090" stroke-width="0.900"/>
<path d="M79 23.800l4.500 8h-9z" fill="#d86060" stroke="#a02020" stroke-width="0.900"/><path d="M79 26.500l2 4h-4z" fill="#c0c0c0" stroke="#a02020" stroke-width="0.600"/>
<path d="M92.500 24.500h5v3h-5z" fill="#205838"/><path d="M95.500 27h6v4.500h-6z" fill="#e8f0e8" stroke="#205838" stroke-width="0.800"/><path d="M93 29.500h2" stroke="#205838" stroke-width="1"/>
<g fill="#8c8c8c"><path d="M137.500 25.500h1.200v5h-1.200zM142 25.500v5l-3.200 -2.500zM145.300 25.500v5l-3.200 -2.500z"/><path d="M158.500 25v6l-6 -3z"/><path d="M171 25.500v5l-3.500 -2.500z"/><circle cx="183.300" cy="28" r="2"/><path d="M195 25.500h1.700v5h-1.700zM198.500 25.500h1.700v5h-1.700z"/><path d="M210 25.500v5l3.500 -2.500z"/><path d="M222.500 25v6l6 -3z"/><path d="M235.500 25.500v5l3.200 -2.500zM238.800 25.500v5l3.200 -2.500zM242 25.500h1.200v5h-1.200z"/></g>
<g fill="none" stroke="#8c8c8c" stroke-width="1"><circle cx="257.500" cy="27" r="2.600"/><path d="M259.500 29l3 2.500M256 27h3M257.500 25.500v3"/><circle cx="271.500" cy="27" r="2.600"/><path d="M273.500 29l3 2.500M270 27h3"/><path d="M283 31.500l7.500 -7M283.500 25h6.500v6.500"/><path d="M320.500 28h7" stroke-width="1.300"/><path d="M334 28h7M337.500 24.800v6.400" stroke-width="1.300"/><rect x="359" y="24.800" width="7" height="6.400"/><path d="M360.500 25v2.500h4v-2.500M360.500 31v-2h4v2"/><path d="M378.500 26.500l5.500 -1.500v5l-5.500 1.500z"/><path d="M380 28.500l3 -1"/><rect x="392.500" y="25" width="7" height="6"/><path d="M394 25v2.500h4M393 29.500h6"/><path d="M411.500 31.500l6.500 -6.500M414.500 25h3.500v3.500"/><path d="M426 31.500l7 -6.500M426 27l3 4"/></g>
<path d="M301.500 28h8M305.500 24.500v7M302.500 25.500h6v5h-6z" fill="none" stroke="#e06868" stroke-width="0.800"/>
<path d="M309.4 45.1h3.600" stroke="#101010" stroke-width="1.300"/>
<rect x="318" y="42.4" width="3.800" height="2.9" fill="none" stroke="#101010" stroke-width="0.900"/><path d="M317.7 42.6h4.400" stroke="#101010" stroke-width="1.300"/>
<path d="M327.6 42.2l3.600 3.3m0 -3.3l-3.600 3.3" stroke="#101010" stroke-width="1.200" fill="none"/>
<path d="M7.1 55l1.500 1.700l2.600 -3.600" stroke="#0a500a" stroke-width="1.100" fill="none"/>
<path d="M22 81.4h3.200M22 95.17h3.200M22 108.93h3.200M22 122.7h3.200M22 136.47h3.200M22 150.23h3.200M22 164h3.200" stroke="#181818" stroke-width="0.900"/>
<path d="M66.3 68V165.2H323.4" stroke="#181818" stroke-width="1" fill="none"/>
<path d="M66.3 68.5h-2.8M66.3 70.89h-1.3M66.3 73.28h-1.3M66.3 75.68h-1.3M66.3 78.07h-1.3M66.3 80.46h-2.8M66.3 82.86h-1.3M66.3 85.25h-1.3M66.3 87.64h-1.3M66.3 90.03h-1.3M66.3 92.42h-2.8M66.3 94.82h-1.3M66.3 97.21h-1.3M66.3 99.6h-1.3M66.3 101.99h-1.3M66.3 104.39h-2.8M66.3 106.78h-1.3M66.3 109.17h-1.3M66.3 111.56h-1.3M66.3 113.96h-1.3M66.3 116.35h-2.8M66.3 118.74h-1.3M66.3 121.13h-1.3M66.3 123.53h-1.3M66.3 125.92h-1.3M66.3 128.31h-2.8M66.3 130.7h-1.3M66.3 133.1h-1.3M66.3 135.49h-1.3M66.3 137.88h-1.3M66.3 140.27h-2.8M66.3 142.67h-1.3M66.3 145.06h-1.3M66.3 147.45h-1.3M66.3 149.84h-1.3M66.3 152.24h-2.8M66.3 154.63h-1.3M66.3 157.02h-1.3M66.3 159.41h-1.3M66.3 161.81h-1.3M66.3 164.2h-2.8M66.8 165.2v3M71.07 165.2v1.5M75.34 165.2v1.5M79.6 165.2v1.5M83.87 165.2v1.5M88.14 165.2v1.5M92.41 165.2v1.5M96.68 165.2v1.5M100.95 165.2v1.5M105.21 165.2v1.5M109.48 165.2v3M113.75 165.2v1.5M118.02 165.2v1.5M122.29 165.2v1.5M126.56 165.2v1.5M130.82 165.2v1.5M135.09 165.2v1.5M139.36 165.2v1.5M143.63 165.2v1.5M147.9 165.2v1.5M152.17 165.2v3M156.44 165.2v1.5M160.7 165.2v1.5M164.97 165.2v1.5M169.24 165.2v1.5M173.51 165.2v1.5M177.78 165.2v1.5M182.04 165.2v1.5M186.31 165.2v1.5M190.58 165.2v1.5M194.85 165.2v3M199.12 165.2v1.5M203.39 165.2v1.5M207.65 165.2v1.5M211.92 165.2v1.5M216.19 165.2v1.5M220.46 165.2v1.5M224.73 165.2v1.5M229 165.2v1.5M233.26 165.2v1.5M237.53 165.2v3M241.8 165.2v1.5M246.07 165.2v1.5M250.34 165.2v1.5M254.61 165.2v1.5M258.87 165.2v1.5M263.14 165.2v1.5M267.41 165.2v1.5M271.68 165.2v1.5M275.95 165.2v1.5M280.22 165.2v3M284.48 165.2v1.5M288.75 165.2v1.5M293.02 165.2v1.5M297.29 165.2v1.5M301.56 165.2v1.5M305.83 165.2v1.5M310.09 165.2v1.5M314.36 165.2v1.5M318.63 165.2v1.5M322.9 165.2v3" stroke="#181818" stroke-width="0.900" fill="none"/>
<path d="M644.1 45.1h3.600" stroke="#101010" stroke-width="1.300"/>
<rect x="652.7" y="42.4" width="3.800" height="2.9" fill="none" stroke="#101010" stroke-width="0.900"/><path d="M652.4 42.6h4.400" stroke="#101010" stroke-width="1.300"/>
<path d="M662.3 42.2l3.600 3.3m0 -3.3l-3.600 3.3" stroke="#101010" stroke-width="1.200" fill="none"/>
<path d="M342.4 55l1.500 1.700l2.600 -3.600" stroke="#0a500a" stroke-width="1.100" fill="none"/>
<path d="M356.6 81.5h3.200M356.6 95.27h3.200M356.6 109.03h3.200M356.6 122.8h3.200M356.6 136.57h3.200M356.6 150.33h3.200M356.6 164.1h3.200" stroke="#181818" stroke-width="0.900"/>
<path d="M400.8 68.1V165.3H657.4" stroke="#181818" stroke-width="1" fill="none"/>
<path d="M400.8 68.6h-2.8M400.8 70.99h-1.3M400.8 73.38h-1.3M400.8 75.78h-1.3M400.8 78.17h-1.3M400.8 80.56h-2.8M400.8 82.95h-1.3M400.8 85.35h-1.3M400.8 87.74h-1.3M400.8 90.13h-1.3M400.8 92.53h-2.8M400.8 94.92h-1.3M400.8 97.31h-1.3M400.8 99.7h-1.3M400.8 102.09h-1.3M400.8 104.49h-2.8M400.8 106.88h-1.3M400.8 109.27h-1.3M400.8 111.67h-1.3M400.8 114.06h-1.3M400.8 116.45h-2.8M400.8 118.84h-1.3M400.8 121.24h-1.3M400.8 123.63h-1.3M400.8 126.02h-1.3M400.8 128.41h-2.8M400.8 130.81h-1.3M400.8 133.2h-1.3M400.8 135.59h-1.3M400.8 137.98h-1.3M400.8 140.38h-2.8M400.8 142.77h-1.3M400.8 145.16h-1.3M400.8 147.55h-1.3M400.8 149.94h-1.3M400.8 152.34h-2.8M400.8 154.73h-1.3M400.8 157.12h-1.3M400.8 159.52h-1.3M400.8 161.91h-1.3M400.8 164.3h-2.8M401.3 165.3v3M405.56 165.3v1.5M409.82 165.3v1.5M414.08 165.3v1.5M418.34 165.3v1.5M422.6 165.3v1.5M426.86 165.3v1.5M431.12 165.3v1.5M435.38 165.3v1.5M439.64 165.3v1.5M443.9 165.3v3M448.16 165.3v1.5M452.42 165.3v1.5M456.68 165.3v1.5M460.94 165.3v1.5M465.2 165.3v1.5M469.46 165.3v1.5M473.72 165.3v1.5M477.98 165.3v1.5M482.24 165.3v1.5M486.5 165.3v3M490.76 165.3v1.5M495.02 165.3v1.5M499.28 165.3v1.5M503.54 165.3v1.5M507.8 165.3v1.5M512.06 165.3v1.5M516.32 165.3v1.5M520.58 165.3v1.5M524.84 165.3v1.5M529.1 165.3v3M533.36 165.3v1.5M537.62 165.3v1.5M541.88 165.3v1.5M546.14 165.3v1.5M550.4 165.3v1.5M554.66 165.3v1.5M558.92 165.3v1.5M563.18 165.3v1.5M567.44 165.3v1.5M571.7 165.3v3M575.96 165.3v1.5M580.22 165.3v1.5M584.48 165.3v1.5M588.74 165.3v1.5M593 165.3v1.5M597.26 165.3v1.5M601.52 165.3v1.5M605.78 165.3v1.5M610.04 165.3v1.5M614.3 165.3v3M618.56 165.3v1.5M622.82 165.3v1.5M627.08 165.3v1.5M631.34 165.3v1.5M635.6 165.3v1.5M639.86 165.3v1.5M644.12 165.3v1.5M648.38 165.3v1.5M652.64 165.3v1.5M656.9 165.3v3" stroke="#181818" stroke-width="0.900" fill="none"/>
<path d="M644.9 196.6h3.600" stroke="#101010" stroke-width="1.300"/>
<rect x="653.5" y="193.9" width="3.800" height="2.9" fill="none" stroke="#101010" stroke-width="0.900"/><path d="M653.2 194.1h4.400" stroke="#101010" stroke-width="1.300"/>
<path d="M663.1 193.7l3.600 3.3m0 -3.3l-3.600 3.3" stroke="#101010" stroke-width="1.200" fill="none"/>
<path d="M342.8 206.5l1.500 1.700l2.600 -3.600" stroke="#0a500a" stroke-width="1.100" fill="none"/>
<path d="M358 233.5h3.200M358 247.52h3.200M358 261.53h3.200M358 275.55h3.200M358 289.57h3.200M358 303.58h3.200M358 317.6h3.200" stroke="#181818" stroke-width="0.900"/>
<path d="M402.8 220.1V318.8H659.3" stroke="#181818" stroke-width="1" fill="none"/>
<path d="M402.8 220.6h-2.8M402.8 223.03h-1.3M402.8 225.46h-1.3M402.8 227.89h-1.3M402.8 230.32h-1.3M402.8 232.75h-2.8M402.8 235.18h-1.3M402.8 237.61h-1.3M402.8 240.04h-1.3M402.8 242.47h-1.3M402.8 244.9h-2.8M402.8 247.33h-1.3M402.8 249.76h-1.3M402.8 252.19h-1.3M402.8 254.62h-1.3M402.8 257.05h-2.8M402.8 259.48h-1.3M402.8 261.91h-1.3M402.8 264.34h-1.3M402.8 266.77h-1.3M402.8 269.2h-2.8M402.8 271.63h-1.3M402.8 274.06h-1.3M402.8 276.49h-1.3M402.8 278.92h-1.3M402.8 281.35h-2.8M402.8 283.78h-1.3M402.8 286.21h-1.3M402.8 288.64h-1.3M402.8 291.07h-1.3M402.8 293.5h-2.8M402.8 295.93h-1.3M402.8 298.36h-1.3M402.8 300.79h-1.3M402.8 303.22h-1.3M402.8 305.65h-2.8M402.8 308.08h-1.3M402.8 310.51h-1.3M402.8 312.94h-1.3M402.8 315.37h-1.3M402.8 317.8h-2.8M403.3 318.8v3M407.56 318.8v1.5M411.82 318.8v1.5M416.07 318.8v1.5M420.33 318.8v1.5M424.59 318.8v1.5M428.85 318.8v1.5M433.11 318.8v1.5M437.37 318.8v1.5M441.62 318.8v1.5M445.88 318.8v3M450.14 318.8v1.5M454.4 318.8v1.5M458.66 318.8v1.5M462.92 318.8v1.5M467.18 318.8v1.5M471.43 318.8v1.5M475.69 318.8v1.5M479.95 318.8v1.5M484.21 318.8v1.5M488.47 318.8v3M492.73 318.8v1.5M496.98 318.8v1.5M501.24 318.8v1.5M505.5 318.8v1.5M509.76 318.8v1.5M514.02 318.8v1.5M518.27 318.8v1.5M522.53 318.8v1.5M526.79 318.8v1.5M531.05 318.8v3M535.31 318.8v1.5M539.57 318.8v1.5M543.83 318.8v1.5M548.08 318.8v1.5M552.34 318.8v1.5M556.6 318.8v1.5M560.86 318.8v1.5M565.12 318.8v1.5M569.38 318.8v1.5M573.63 318.8v3M577.89 318.8v1.5M582.15 318.8v1.5M586.41 318.8v1.5M590.67 318.8v1.5M594.92 318.8v1.5M599.18 318.8v1.5M603.44 318.8v1.5M607.7 318.8v1.5M611.96 318.8v1.5M616.22 318.8v3M620.47 318.8v1.5M624.73 318.8v1.5M628.99 318.8v1.5M633.25 318.8v1.5M637.51 318.8v1.5M641.77 318.8v1.5M646.02 318.8v1.5M650.28 318.8v1.5M654.54 318.8v1.5M658.8 318.8v3" stroke="#181818" stroke-width="0.900" fill="none"/>
<path d="M645.4 349.7h3.600" stroke="#101010" stroke-width="1.300"/>
<rect x="654" y="347" width="3.800" height="2.9" fill="none" stroke="#101010" stroke-width="0.900"/><path d="M653.7 347.2h4.400" stroke="#101010" stroke-width="1.300"/>
<path d="M663.6 346.8l3.600 3.3m0 -3.3l-3.600 3.3" stroke="#101010" stroke-width="1.200" fill="none"/>
<path d="M342.8 359.6l1.500 1.700l2.600 -3.600" stroke="#0a500a" stroke-width="1.100" fill="none"/>
<path d="M358 386.3h3.200M358 398.57h3.200M358 410.84h3.200M358 423.11h3.200M358 435.39h3.200M358 447.66h3.200M358 459.93h3.200M358 472.2h3.200" stroke="#181818" stroke-width="0.900"/>
<path d="M402.8 372.9V473.4H659.4" stroke="#181818" stroke-width="1" fill="none"/>
<path d="M402.8 373.4h-2.8M402.8 375.88h-1.3M402.8 378.35h-1.3M402.8 380.82h-1.3M402.8 383.3h-1.3M402.8 385.77h-2.8M402.8 388.25h-1.3M402.8 390.72h-1.3M402.8 393.2h-1.3M402.8 395.67h-1.3M402.8 398.15h-2.8M402.8 400.62h-1.3M402.8 403.1h-1.3M402.8 405.57h-1.3M402.8 408.05h-1.3M402.8 410.52h-2.8M402.8 413h-1.3M402.8 415.47h-1.3M402.8 417.95h-1.3M402.8 420.42h-1.3M402.8 422.9h-2.8M402.8 425.38h-1.3M402.8 427.85h-1.3M402.8 430.32h-1.3M402.8 432.8h-1.3M402.8 435.27h-2.8M402.8 437.75h-1.3M402.8 440.22h-1.3M402.8 442.7h-1.3M402.8 445.17h-1.3M402.8 447.65h-2.8M402.8 450.12h-1.3M402.8 452.6h-1.3M402.8 455.07h-1.3M402.8 457.55h-1.3M402.8 460.02h-2.8M402.8 462.5h-1.3M402.8 464.97h-1.3M402.8 467.45h-1.3M402.8 469.92h-1.3M402.8 472.4h-2.8M403.3 473.4v3M407.56 473.4v1.5M411.82 473.4v1.5M416.08 473.4v1.5M420.34 473.4v1.5M424.6 473.4v1.5M428.86 473.4v1.5M433.12 473.4v1.5M437.38 473.4v1.5M441.64 473.4v1.5M445.9 473.4v3M450.16 473.4v1.5M454.42 473.4v1.5M458.68 473.4v1.5M462.94 473.4v1.5M467.2 473.4v1.5M471.46 473.4v1.5M475.72 473.4v1.5M479.98 473.4v1.5M484.24 473.4v1.5M488.5 473.4v3M492.76 473.4v1.5M497.02 473.4v1.5M501.28 473.4v1.5M505.54 473.4v1.5M509.8 473.4v1.5M514.06 473.4v1.5M518.32 473.4v1.5M522.58 473.4v1.5M526.84 473.4v1.5M531.1 473.4v3M535.36 473.4v1.5M539.62 473.4v1.5M543.88 473.4v1.5M548.14 473.4v1.5M552.4 473.4v1.5M556.66 473.4v1.5M560.92 473.4v1.5M565.18 473.4v1.5M569.44 473.4v1.5M573.7 473.4v3M577.96 473.4v1.5M582.22 473.4v1.5M586.48 473.4v1.5M590.74 473.4v1.5M595 473.4v1.5M599.26 473.4v1.5M603.52 473.4v1.5M607.78 473.4v1.5M612.04 473.4v1.5M616.3 473.4v3M620.56 473.4v1.5M624.82 473.4v1.5M629.08 473.4v1.5M633.34 473.4v1.5M637.6 473.4v1.5M641.86 473.4v1.5M646.12 473.4v1.5M650.38 473.4v1.5M654.64 473.4v1.5M658.9 473.4v3" stroke="#181818" stroke-width="0.900" fill="none"/>
<rect x="5.5" y="192.5" width="7.500" height="7.600" fill="#f0e0d0"/><path d="M6 197.5q3.200 -5 6.500 0z" fill="#e05020"/><path d="M5.5 198.8h7.500" stroke="#a08060" stroke-width="1"/>
<path d="M309.4 197.6h3.600" stroke="#101010" stroke-width="1.300"/>
<rect x="318" y="195.3" width="3.800" height="2.5" fill="none" stroke="#101010" stroke-width="0.900"/><path d="M317.7 195.5h4.400" stroke="#101010" stroke-width="1.300"/>
<path d="M327.6 195.1l3.600 2.9m0 -2.9l-3.600 2.9" stroke="#101010" stroke-width="1.200" fill="none"/>
<path d="M106.06 226V462M137.12 226V462M168.19 226V462M199.25 226V462M230.31 226V462M261.38 226V462M292.44 226V462M75 265.33H323.5M75 304.67H323.5M75 344H323.5M75 383.33H323.5M75 422.67H323.5" stroke="#848484" stroke-width="0.650" fill="none"/>
<path d="M75 226.3H323.5" stroke="#a4a4a4" stroke-width="0.800"/>
<path d="M74.5 226V462.5H324" stroke="#181818" stroke-width="1" fill="none"/>
<path d="M74.5 226.3h-3M74.5 234.17h-1.5M74.5 242.03h-1.5M74.5 249.9h-1.5M74.5 257.77h-1.5M74.5 265.63h-3M74.5 273.5h-1.5M74.5 281.37h-1.5M74.5 289.23h-1.5M74.5 297.1h-1.5M74.5 304.97h-3M74.5 312.83h-1.5M74.5 320.7h-1.5M74.5 328.57h-1.5M74.5 336.43h-1.5M74.5 344.3h-3M74.5 352.17h-1.5M74.5 360.03h-1.5M74.5 367.9h-1.5M74.5 375.77h-1.5M74.5 383.63h-3M74.5 391.5h-1.5M74.5 399.37h-1.5M74.5 407.23h-1.5M74.5 415.1h-1.5M74.5 422.97h-3M74.5 430.83h-1.5M74.5 438.7h-1.5M74.5 446.57h-1.5M74.5 454.43h-1.5M74.5 462.3h-3M75 462.5v3M81.21 462.5v1.5M87.42 462.5v1.5M93.64 462.5v1.5M99.85 462.5v1.5M106.06 462.5v3M112.28 462.5v1.5M118.49 462.5v1.5M124.7 462.5v1.5M130.91 462.5v1.5M137.12 462.5v3M143.34 462.5v1.5M149.55 462.5v1.5M155.76 462.5v1.5M161.97 462.5v1.5M168.19 462.5v3M174.4 462.5v1.5M180.61 462.5v1.5M186.82 462.5v1.5M193.04 462.5v1.5M199.25 462.5v3M205.46 462.5v1.5M211.68 462.5v1.5M217.89 462.5v1.5M224.1 462.5v1.5M230.31 462.5v3M236.53 462.5v1.5M242.74 462.5v1.5M248.95 462.5v1.5M255.16 462.5v1.5M261.38 462.5v3M267.59 462.5v1.5M273.8 462.5v1.5M280.01 462.5v1.5M286.23 462.5v1.5M292.44 462.5v3M298.65 462.5v1.5M304.86 462.5v1.5M311.07 462.5v1.5M317.29 462.5v1.5M323.5 462.5v3" stroke="#181818" stroke-width="0.900" fill="none"/>
<path d="M75.0 299.9L76.6 300.9L78.1 301.1L79.7 301.9L81.2 302.3L82.8 302.6L84.3 302.9L85.9 304.0L87.4 303.9L89.0 305.1L90.5 306.2L92.7 273.2L94.9 263.0L96.5 263.1L98.1 261.6L99.7 261.9L101.3 261.5L102.9 260.1L104.5 260.3L106.1 259.8L107.6 259.4L109.2 259.9L110.7 259.7L112.3 260.3L113.8 259.7L115.4 259.4L116.9 259.8L118.5 259.5L120.0 259.6L121.6 260.4L123.1 259.5L124.7 259.8L126.3 259.4L127.8 259.6L129.4 259.6L130.9 258.3L132.5 258.5L134.0 258.0L135.6 257.5L137.1 257.5L138.7 256.9L140.2 257.3L141.8 256.6L143.3 256.7L144.9 256.8L146.4 256.3L148.0 256.4L149.6 257.4L151.1 257.5L152.7 257.4L154.2 256.6L155.8 257.3L157.3 257.1L158.9 257.6L160.4 257.4L162.0 257.5L163.5 257.9L165.1 258.3L166.6 258.3L168.2 258.7L169.7 258.6L171.3 259.2L172.8 259.2L174.4 259.6L176.0 259.8L177.5 260.5L179.1 261.5L180.6 261.4L182.2 261.1L183.7 261.1L185.3 261.4L186.8 261.9L188.4 261.9L189.9 262.7L191.5 262.1L193.0 262.6L194.6 263.1L196.1 263.0L197.7 263.4L199.2 262.3L200.8 262.0L202.4 263.0L203.9 262.0L205.5 262.4L207.0 262.6L208.6 262.3L210.1 261.6L211.7 261.4L213.2 262.3L214.8 261.5L216.3 262.1L217.9 261.4L219.4 260.9L221.0 261.1L222.5 260.1L224.1 259.7L225.7 260.1L227.2 259.2L228.8 259.8L230.3 259.8L231.9 258.9L233.4 259.4L235.0 258.9L236.5 258.3L238.1 258.1L239.7 257.6L241.3 257.9L242.9 257.8L244.4 256.5L246.0 257.0L247.6 255.9L249.2 255.8L250.8 256.2L252.3 255.8L253.9 255.5L255.6 255.6L257.3 255.6L259.0 255.8L260.8 256.0L262.5 256.1L264.2 255.8L265.9 256.5L267.6 256.7L269.1 257.1L270.7 257.0L272.2 257.9L273.8 258.1L275.4 257.6L276.9 258.4L278.5 258.7L280.0 259.0L281.6 259.7L283.1 259.3L284.7 259.2L286.2 260.0L287.8 259.3L289.3 259.3L290.9 260.1L292.4 259.5L294.0 259.8L295.5 259.8L297.4 260.6L299.3 261.4L301.8 281.1L303.6 286.6L305.4 292.1L307.3 290.8L309.2 290.2L311.1 288.9L312.6 288.1L314.2 287.5L315.7 287.8L317.3 286.6L318.8 286.6L320.4 285.4L321.9 284.5L323.5 284.6" stroke="#e8e48c" stroke-width="1.5" fill="none" stroke-linejoin="round"/>
<path d="M75.0 336.1L76.6 337.5L78.1 338.2L79.7 338.9L81.2 340.1L83.1 341.5L84.9 342.6L86.8 343.9L88.7 344.8L90.8 342.4L92.1 312.5L94.9 299.9L96.5 299.5L98.1 298.4L99.7 298.2L101.3 297.4L102.9 296.1L104.5 296.6L106.1 295.2L107.6 295.1L109.2 294.9L110.7 295.5L112.3 295.7L113.8 294.7L115.4 295.6L116.9 295.7L118.5 295.3L120.0 294.9L121.6 295.9L123.1 295.5L124.7 295.2L126.3 295.1L127.8 293.8L129.4 294.0L130.9 293.0L132.5 293.6L134.0 292.9L135.6 292.0L137.1 291.2L138.7 291.5L140.2 291.4L141.8 291.1L143.3 290.1L144.9 290.1L146.4 290.7L148.0 289.8L149.6 289.8L151.1 290.9L152.7 290.9L154.2 290.1L155.8 290.4L157.3 290.2L158.9 291.0L160.4 291.4L162.0 290.9L163.5 291.7L165.1 291.3L166.6 292.5L168.2 292.8L169.7 293.2L171.3 293.6L172.8 294.0L174.4 293.6L176.0 295.3L177.5 295.9L179.1 294.9L180.6 296.0L182.2 295.7L183.7 295.7L185.3 296.8L186.8 296.2L188.4 296.5L189.9 297.9L191.5 297.3L193.0 297.4L194.6 297.9L196.1 298.4L197.7 298.2L199.2 298.5L200.8 298.3L202.4 298.4L203.9 298.5L205.5 297.6L207.0 297.9L208.6 297.0L210.1 298.1L211.7 296.6L213.2 296.8L214.8 296.4L216.3 296.3L217.9 296.8L219.4 295.8L221.0 296.0L222.5 296.6L224.1 295.1L225.7 295.7L227.2 295.1L228.8 294.2L230.3 294.1L231.9 294.0L233.4 292.8L235.0 293.0L236.5 292.9L238.1 292.8L239.7 292.7L241.3 291.4L242.9 291.8L244.4 291.0L246.0 291.4L247.6 291.3L249.2 290.5L250.8 289.8L252.3 290.5L253.9 289.7L255.6 289.5L257.3 289.5L259.0 290.0L260.8 290.2L262.5 291.7L264.2 291.0L265.9 290.9L267.6 291.7L269.1 292.7L270.7 292.7L272.2 293.1L273.8 293.0L275.4 293.5L276.9 293.8L278.5 293.7L280.0 294.4L281.6 295.3L283.1 295.3L284.7 295.3L286.2 295.4L287.8 295.6L289.3 294.3L290.9 294.6L292.4 295.2L294.0 296.3L295.5 296.0L297.1 296.7L298.6 296.8L300.5 328.3L302.1 336.1L303.6 344.0L305.8 345.9L308.0 347.1L309.5 346.0L311.1 344.8L312.6 347.9L314.2 351.1L315.7 351.9L317.3 352.7L318.8 350.7L320.4 348.7L321.9 347.5L323.5 346.4" stroke="#58d058" stroke-width="1.3" fill="none" stroke-linejoin="round"/>
<path d="M75.0 403.0L76.6 405.7L78.1 407.9L79.7 410.6L81.2 413.2L82.9 416.0L84.5 418.9L86.2 421.1L88.0 421.1L89.9 421.1L91.3 367.6L92.1 344.8L93.6 343.9L95.2 343.1L96.7 341.4L98.3 340.1L99.8 339.3L101.4 339.4L103.0 339.7L104.5 339.5L106.1 339.2L107.6 338.8L109.2 338.5L110.7 339.0L112.3 338.4L113.8 338.5L115.4 338.7L116.9 338.7L118.5 338.5L120.0 338.3L121.6 337.8L123.1 338.0L124.7 337.5L126.3 337.6L127.8 337.6L129.4 337.1L130.9 336.7L132.5 337.3L134.0 336.6L135.6 336.4L137.1 335.7L138.7 335.4L140.2 335.9L141.8 335.0L143.3 335.3L144.9 335.1L146.4 335.9L148.0 335.8L149.6 336.3L151.1 335.6L152.7 335.9L154.2 335.8L155.8 336.0L157.3 336.3L158.9 336.4L160.4 336.7L162.0 336.9L163.5 337.6L165.1 337.2L166.6 338.1L168.2 338.2L169.7 337.6L171.3 338.7L172.8 338.8L174.4 339.0L176.0 338.2L177.5 339.3L179.1 339.7L180.6 339.3L182.2 338.9L183.7 339.9L185.3 339.0L186.8 339.3L188.4 339.2L189.9 339.1L191.5 339.6L193.0 339.4L194.6 340.5L196.1 339.6L197.7 340.0L199.2 340.1L200.8 339.7L202.4 340.4L203.9 339.6L205.5 339.3L207.0 340.3L208.6 339.9L210.1 339.5L211.7 339.1L213.2 339.8L214.8 339.8L216.3 339.7L217.9 339.3L219.4 338.9L221.0 338.6L222.5 338.8L224.1 338.7L225.7 338.4L227.2 338.3L228.8 338.0L230.3 338.2L231.9 337.5L233.4 336.7L235.0 337.2L236.5 336.9L238.1 336.5L239.6 337.1L241.2 336.3L242.7 336.1L244.3 336.0L245.8 336.1L247.4 336.0L248.9 335.7L250.5 335.2L252.1 336.1L253.6 336.0L255.2 335.3L256.7 335.2L258.3 335.1L259.8 335.7L261.4 335.9L262.9 335.7L264.5 336.5L266.0 336.6L267.6 336.8L269.1 336.4L270.7 336.9L272.2 337.1L273.8 336.9L275.4 336.8L276.9 336.6L278.5 337.6L280.0 337.2L281.6 337.7L283.1 337.3L284.7 337.7L286.2 338.3L287.8 338.5L289.3 338.8L290.9 338.4L292.4 338.5L294.0 339.0L295.5 339.7L297.1 339.8L298.6 340.1L300.2 351.9L301.1 405.4L303.6 411.7L306.4 417.6L308.0 416.6L309.5 414.8L311.1 414.0L312.6 413.5L314.2 411.4L315.7 411.1L317.3 410.1L318.8 409.0L320.4 408.2L321.9 406.7L323.5 406.1" stroke="#78dcdc" stroke-width="1.6" fill="none" stroke-linejoin="round"/>
<path d="M99.8 462.0L100.5 438.4L101.7 429.7L103.9 428.7L106.1 428.2L107.6 427.0L109.2 425.8L110.7 425.9L112.3 426.1L113.8 426.0L115.4 426.1L116.9 426.5L118.5 426.6L120.0 426.4L121.6 426.2L123.1 426.6L124.7 426.8L126.3 426.8L127.8 426.4L129.4 426.5L130.9 426.2L132.5 426.3L134.0 426.8L135.6 426.8L137.1 426.6L138.7 426.8L140.2 426.8L141.8 426.4L143.3 426.3L144.9 426.3L146.4 426.8L148.0 426.3L149.6 426.7L151.1 426.7L152.7 426.4L154.2 426.9L155.8 426.6L157.3 427.1L158.9 426.7L160.4 427.4L162.0 427.5L163.5 427.5L165.1 427.6L166.6 428.4L168.2 428.3L169.7 428.4L171.3 428.6L172.8 429.0L174.4 429.0L176.0 429.1L177.5 428.9L179.1 429.5L180.6 429.6L182.2 430.1L183.7 430.1L185.3 430.0L186.8 430.6L188.4 430.1L189.9 430.3L191.5 431.1L193.0 430.9L194.6 430.5L196.1 431.0L197.7 430.6L199.2 430.6L200.8 430.9L202.4 430.6L203.9 430.6L205.5 430.4L207.0 430.8L208.6 430.4L210.1 430.2L211.7 430.5L213.2 430.3L214.8 430.2L216.3 430.4L217.9 430.0L219.4 430.0L221.0 429.6L222.5 429.5L224.1 429.4L225.7 429.6L227.2 429.1L228.8 429.0L230.3 429.0L231.9 429.0L233.4 428.3L235.0 428.3L236.5 428.6L238.1 427.8L239.6 428.3L241.2 427.9L242.7 427.5L244.3 427.4L245.8 427.3L247.4 427.0L248.9 427.0L250.5 426.9L252.1 426.8L253.6 426.8L255.2 426.7L256.7 426.1L258.3 425.9L259.8 425.9L261.4 425.8L262.9 425.7L264.5 426.1L266.0 426.3L267.6 426.3L269.1 426.0L270.7 426.8L272.2 426.5L273.8 426.6L275.4 426.9L276.9 426.5L278.5 426.9L280.0 427.0L281.6 427.0L283.1 427.0L284.7 426.8L286.2 427.2L287.8 426.9L289.3 427.6L290.9 427.5L292.4 427.4L294.0 427.8L295.5 428.0L297.1 427.6L298.6 427.7L300.2 428.3L301.8 428.2L303.9 430.0L306.1 431.3L308.0 442.3L308.9 462.0" stroke="#3c44b4" stroke-width="1.1" fill="none" stroke-linejoin="round"/>
<rect x="58.6" y="503.700" width="3" height="3.400" fill="none" stroke="#101010" stroke-width="0.900"/><path d="M57.4 507.200h2.300" stroke="#101010" stroke-width="1.300"/>
<rect x="66.1" y="503.900" width="3.500" height="3.400" fill="none" stroke="#101010" stroke-width="0.900"/><path d="M65.8 504.100h4.100" stroke="#101010" stroke-width="1.300"/>
<path d="M77 503.900l3.300 3.600m0 -3.600l-3.300 3.600" stroke="#101010" stroke-width="1.200" fill="none"/>
<rect x="143.6" y="503.700" width="3" height="3.400" fill="none" stroke="#101010" stroke-width="0.900"/><path d="M142.4 507.200h2.300" stroke="#101010" stroke-width="1.300"/>
<rect x="151.1" y="503.900" width="3.500" height="3.400" fill="none" stroke="#101010" stroke-width="0.900"/><path d="M150.8 504.100h4.100" stroke="#101010" stroke-width="1.300"/>
<path d="M162 503.900l3.300 3.600m0 -3.600l-3.300 3.600" stroke="#101010" stroke-width="1.200" fill="none"/>
<path d="M172 501h3l3 3l3 -1.500v4l-9 3z" fill="#e02020"/><path d="M172 507.500l9 -2.500v4.500h-9z" fill="#f4f4f4"/><path d="M172 507l9 -3" stroke="#f4f4f4" stroke-width="1"/>
<rect x="226.1" y="503.700" width="3" height="3.400" fill="none" stroke="#101010" stroke-width="0.900"/><path d="M224.9 507.200h2.300" stroke="#101010" stroke-width="1.300"/>
<rect x="233.6" y="503.900" width="3.500" height="3.400" fill="none" stroke="#101010" stroke-width="0.900"/><path d="M233.3 504.100h4.100" stroke="#101010" stroke-width="1.300"/>
<path d="M244.5 503.900l3.300 3.600m0 -3.600l-3.300 3.600" stroke="#101010" stroke-width="1.200" fill="none"/>
<rect x="256" y="505.500" width="8.500" height="4" fill="#f0c820"/><path d="M256 506l2 -4.300l2.200 2.300l2.200 -2.300l2.100 4.300z" fill="#e03020"/>
<rect x="309.6" y="503.700" width="3" height="3.400" fill="none" stroke="#101010" stroke-width="0.900"/><path d="M308.4 507.200h2.300" stroke="#101010" stroke-width="1.300"/>
<rect x="317.1" y="503.900" width="3.500" height="3.400" fill="none" stroke="#101010" stroke-width="0.900"/><path d="M316.8 504.100h4.100" stroke="#101010" stroke-width="1.300"/>
<path d="M328 503.900l3.300 3.600m0 -3.600l-3.300 3.600" stroke="#101010" stroke-width="1.200" fill="none"/>
<rect x="393.6" y="503.700" width="3" height="3.400" fill="none" stroke="#101010" stroke-width="0.900"/><path d="M392.4 507.200h2.300" stroke="#101010" stroke-width="1.300"/>
<rect x="401.1" y="503.900" width="3.500" height="3.400" fill="none" stroke="#101010" stroke-width="0.900"/><path d="M400.8 504.100h4.100" stroke="#101010" stroke-width="1.300"/>
<path d="M412 503.900l3.300 3.600m0 -3.600l-3.300 3.600" stroke="#101010" stroke-width="1.200" fill="none"/>
<rect x="476.6" y="503.700" width="3" height="3.400" fill="none" stroke="#101010" stroke-width="0.900"/><path d="M475.4 507.200h2.300" stroke="#101010" stroke-width="1.300"/>
<rect x="484.1" y="503.900" width="3.500" height="3.400" fill="none" stroke="#101010" stroke-width="0.900"/><path d="M483.8 504.100h4.100" stroke="#101010" stroke-width="1.300"/>
<path d="M495 503.900l3.300 3.600m0 -3.600l-3.300 3.600" stroke="#101010" stroke-width="1.200" fill="none"/>
<path d="M483.8 514.300h8.400l-2.900 3.300l2.900 4.400h-8.400l2.900 -4.400z" fill="#28d028" stroke="#0c700c" stroke-width="0.700"/>
<path d="M494 514.300h8.400l-2.900 3.300l2.900 4.400h-8.400l2.900 -4.400z" fill="#28d028" stroke="#0c700c" stroke-width="0.700"/>
<path d="M504.3 514.300h8.400l-2.900 3.300l2.900 4.400h-8.400l2.900 -4.400z" fill="#28d028" stroke="#0c700c" stroke-width="0.700"/>
<path d="M514.5 514.300h8.400l-2.900 3.300l2.900 4.400h-8.400l2.900 -4.400z" fill="#28d028" stroke="#0c700c" stroke-width="0.700"/>
<rect x="526.700" y="515.800" width="34.300" height="4.600" fill="#20b020" stroke="#0c600c" stroke-width="0.800"/><path d="M533.500 515.800v4.600M540.400 515.800v4.600M547.200 515.800v4.600M554 515.800v4.600" stroke="#70d070" stroke-width="1"/>
<path d="M569.700 514l4.900 8.300h-9.800z" fill="#28c828" stroke="#0c500c" stroke-width="0.800"/><path d="M568 520.500l1.700 -3.500l1.700 3.500" stroke="#0c500c" stroke-width="0.800" fill="none"/>
<path d="M578 518.300l3.500 -2.200v4.400zM595.300 518.300l-3.500 -2.200v4.400z" fill="#101010"/><circle cx="584.500" cy="518.300" r="2.300" fill="#f0e020" stroke="#303000" stroke-width="0.700"/><circle cx="589.500" cy="518.300" r="2.300" fill="#f0e020" stroke="#303000" stroke-width="0.700"/>
<circle cx="603.100" cy="518.300" r="4" fill="#28d028" stroke="#0c700c" stroke-width="0.700"/>
<rect x="611" y="514.500" width="8" height="7.500" rx="1" fill="#f4ec70" stroke="#605010" stroke-width="0.800"/><path d="M616.500 518.300h2.500" stroke="#605010" stroke-width="0.800"/>
<rect x="622.500" y="514" width="10" height="8.800" fill="#a8a8a8"/><path d="M627.500 515l3.300 3.400l-3.300 3.400l-3.300 -3.400z" fill="#ffffff"/>
<path d="M635.300 514v9M638.500 514v9" stroke="#909090" stroke-width="1"/>
<path d="M4.500 528l2 -0.500v3.500l-2 0.300z" fill="#303030"/><path d="M6.800 527.400l2.400 -0.300v3.500l-2.400 0.300z" fill="#d03030"/><path d="M9.400 527.400l2.300 0.300v3.200l-2.300 -0.300z" fill="#30a030"/><path d="M6.800 531.300l2.400 -0.300v3.500l-2.400 0.300z" fill="#3040c0"/><path d="M9.400 531.200l2.300 0.300v3.200l-2.300 -0.300z" fill="#d8c020"/><path d="M3.500 529h1v6h-1z" fill="#404040"/>
<circle cx="45" cy="531.200" r="3.900" fill="#2448e0"/><path d="M41 532q4 -3.500 8.500 -1.500" stroke="#d0dcff" stroke-width="1" fill="none"/><path d="M42.500 531.500h5" stroke="#d0dcff" stroke-width="0.800"/>
<circle cx="55.500" cy="529.500" r="2.200" fill="#2840b8"/><circle cx="58" cy="533" r="2.500" fill="#4060d0"/><rect x="53" y="532.500" width="3" height="2.500" fill="#f0f0f0" stroke="#303060" stroke-width="0.500"/>
<rect x="65.500" y="528.800" width="7.500" height="6" fill="#f0f0f8" stroke="#506080" stroke-width="0.800"/><path d="M67 534l4.500 -6" stroke="#203050" stroke-width="1.100"/><path d="M66.500 532.500l2 1.500" stroke="#c04040" stroke-width="0.800"/>
<circle cx="81.300" cy="531" r="3.700" fill="#58a8c0"/><path d="M79.300 529q1.500 4.500 4.500 1.500" stroke="#0c3848" stroke-width="1.100" fill="none"/><path d="M79 535.200h4.500" stroke="#404040" stroke-width="0.900"/>
<path d="M99 527.500h6.500v7.500h-6.500z" fill="#f0c020"/><path d="M101 535l2.200 -7.500h1.800l-2.200 7.500z" fill="#7a2800"/><path d="M99 535l1.500 -7.500h1l-1.500 7.500z" fill="#b06010"/>
<rect x="268.800" y="527.300" width="5" height="6.500" fill="#f4f4d8" stroke="#606020" stroke-width="0.700"/><circle cx="273.300" cy="532.500" r="1.900" fill="#d0e8d0" stroke="#204820" stroke-width="0.900"/><path d="M274.500 534l1.500 1.500" stroke="#204820" stroke-width="1"/>
<path d="M354.500 535l2.500 -7h2.500l-2 7z" fill="#404098"/><path d="M357 527.500q3.500 -1 4 2q-2.500 2.500 -4.500 0.500z" fill="#d84040"/><path d="M354.500 535l3 -1" stroke="#c0c0e0" stroke-width="0.800"/>
<path d="M611 530h1.500l2.500 -2.500v7.500l-2.500 -2.500h-1.500z" fill="#e8d860" stroke="#383818" stroke-width="0.600"/>
<path d="M619.500 530h4v3h-4zM625.500 529h3.500v4.500h-3.500zM631 530h4v2.500h-4z" fill="#c8d0f0"/><path d="M619 534.500h6" stroke="#909090" stroke-width="1"/>
<circle cx="641.500" cy="532" r="3.300" fill="#f4f4f4" stroke="#707070" stroke-width="0.800"/></svg></body></html>
